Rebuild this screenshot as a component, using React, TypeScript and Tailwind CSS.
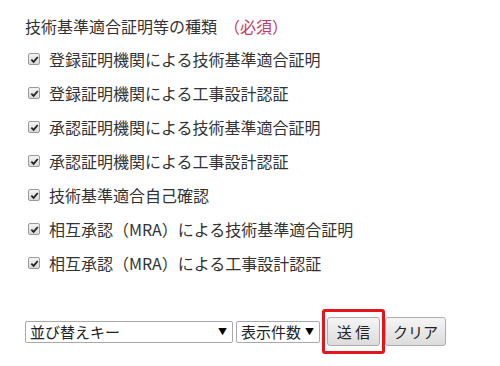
const items = [
    "登録証明機関による技術基準適合証明",
    "登録証明機関による工事設計認証",
    "承認証明機関による技術基準適合証明",
    "承認証明機関による工事設計認証",
    "技術基準適合自己確認",
    "相互承認（MRA）による技術基準適合証明",
    "相互承認（MRA）による工事設計認証",
]

function CheckBox() {
    return (
        <span className="flex size-[12px] shrink-0 items-center justify-center rounded-[2px] border border-[#9a9a9a] bg-gradient-to-b from-[#f4f4f4] to-[#d8d8d8]">
            <svg viewBox="0 0 10 10" className="size-[9px]">
                <path d="M1.5 5.2 L4 7.6 L8.6 2.2" fill="none" stroke="#222" strokeWidth="2" />
            </svg>
        </span>
    )
}

function FakeSelect({ label, className }: { label: string; className: string }) {
    return (
        <div
            className={`flex h-[22px] items-center justify-between whitespace-nowrap rounded-[2px] border border-[#a9a9a9] bg-white pl-[4px] pr-[5px] text-[15px] text-[#222] ${className}`}
        >
            <span className="leading-none">{label}</span>
            <span className="text-[9px] leading-none text-black">▼</span>
        </div>
    )
}

export default function App() {
    return (
        <div
            className="h-[366px] w-[500px] bg-white pl-[25px] text-[#333]"
            style={{ fontFamily: '"Noto Sans CJK JP", "Noto Sans", sans-serif' }}
        >
            <div className="flex h-[20px] pt-[16px] box-content items-center text-[16px] leading-none">
                <span>技術基準適合証明等の種類</span>
                <span className="ml-[7px] text-[#c73b5d]">（必須）</span>
            </div>

            <ul className="mt-[6px] flex flex-col">
                {items.map((item) => (
                    <li key={item} className="flex h-[34px] items-center gap-[9px] pl-[3px] text-[16px] leading-none">
                        <CheckBox />
                        <span>{item}</span>
                    </li>
                ))}
            </ul>

            <div className="mt-[29px] flex h-[45px] items-center">
                <FakeSelect label="並び替えキー" className="w-[208px]" />
                <FakeSelect label="表示件数" className="ml-[3px] w-[84px] pr-[3px] text-[14.5px]" />
                <div className="ml-[2px] flex h-[45px] w-[63px] items-center justify-center rounded-[3px] border-[3px] border-[#e3161c]">
                    <button className="h-[29px] w-[53px] rounded-[3px] border border-[#adadad] bg-gradient-to-b from-[#f5f5f5] to-[#dcdcdc] text-[15px] leading-none text-[#222]">
                        送 信
                    </button>
                </div>
                <button className="h-[29px] w-[61px] rounded-[3px] border border-[#adadad] bg-gradient-to-b from-[#f5f5f5] to-[#dcdcdc] text-[15px] leading-none text-[#222]">
                    クリア
                </button>
            </div>
        </div>
    )
}
